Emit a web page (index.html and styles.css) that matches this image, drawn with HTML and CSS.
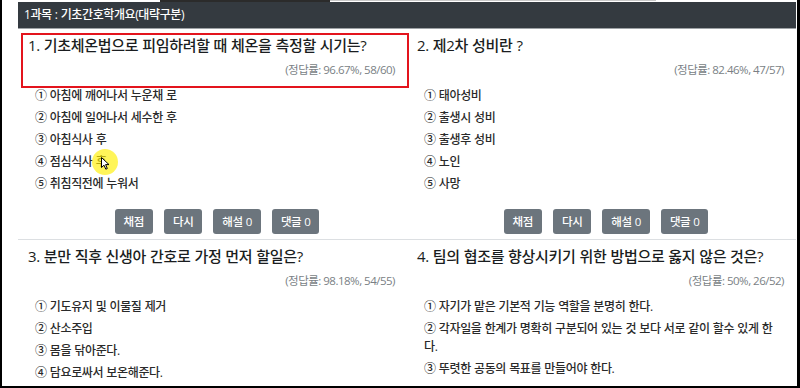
FILE: index.html
```html
<!DOCTYPE html>
<html lang="ko">
<head>
<meta charset="utf-8">
<title>1과목 : 기초간호학개요</title>
<link rel="stylesheet" href="styles.css">
</head>
<body>
<div class="frame">
  <div class="topstrip"><span class="ts-dark"></span><span class="ts-light"></span></div>
  <div class="sheet">
    <div class="subject">1과목 : 기초간호학개요(대략구분)</div>
    <div class="grid">
      <section class="q q-top">
        <h2 class="q-title">1. 기초체온법으로 피임하려할 때 체온을 측정할 시기는?</h2>
        <p class="q-stat">(정답률: 96.67%, 58/60)</p>
        <ul class="opts">
          <li>① 아침에 깨어나서 누운채 로</li>
          <li>② 아침에 일어나서 세수한 후</li>
          <li>③ 아침식사 후</li>
          <li>④ 점심식사 후</li>
          <li>⑤ 취침직전에 누워서</li>
        </ul>
        <div class="actions">
          <button class="btn">채점</button>
          <button class="btn">다시</button>
          <button class="btn">해설 0</button>
          <button class="btn">댓글 0</button>
        </div>
      </section>
      <section class="q q-top">
        <h2 class="q-title">2. 제2차 성비란 ?</h2>
        <p class="q-stat">(정답률: 82.46%, 47/57)</p>
        <ul class="opts">
          <li>① 태아성비</li>
          <li>② 출생시 성비</li>
          <li>③ 출생후 성비</li>
          <li>④ 노인</li>
          <li>⑤ 사망</li>
        </ul>
        <div class="actions">
          <button class="btn">채점</button>
          <button class="btn">다시</button>
          <button class="btn">해설 0</button>
          <button class="btn">댓글 0</button>
        </div>
      </section>
      <section class="q">
        <h2 class="q-title">3. 분만 직후 신생아 간호로 가정 먼저 할일은?</h2>
        <p class="q-stat">(정답률: 98.18%, 54/55)</p>
        <ul class="opts">
          <li>① 기도유지 및 이물질 제거</li>
          <li>② 산소주입</li>
          <li>③ 몸을 닦아준다.</li>
          <li>④ 담요로싸서 보온해준다.</li>
        </ul>
      </section>
      <section class="q">
        <h2 class="q-title">4. 팀의 협조를 향상시키기 위한 방법으로 옳지 않은 것은?</h2>
        <p class="q-stat">(정답률: 50%, 26/52)</p>
        <ul class="opts">
          <li>① 자기가 맡은 기본적 기능 역할을 분명히 한다.</li>
          <li>② 각자일을 한계가 명확히 구분되어 있는 것 보다 서로 같이 할수 있게 한다.</li>
          <li>③ 뚜렷한 공동의 목표를 만들어야 한다.</li>
        </ul>
      </section>
    </div>
    <div class="annot"></div>
    <div class="pointer">
      <svg class="arrow" width="9" height="13" viewBox="0 0 9 13"><path d="M0.5 0.5 L0.5 10.5 L3 8.2 L4.8 12.2 L6.3 11.5 L4.6 7.6 L8 7.6 Z" fill="#fff" stroke="#000" stroke-width="1" stroke-linejoin="round"/></svg>
    </div>
  </div>
</div>
</body>
</html>
```
FILE: styles.css
```css
* { box-sizing: border-box; }
html, body { margin: 0; padding: 0; background: #fff; }
body {
  font-family: "Open Sans", "Noto Sans CJK KR", sans-serif;
  color: #212529;
}
.frame {
  width: 800px;
  height: 388px;
  border-left: 2px solid #000;
  border-right: 3px solid #000;
  border-bottom: 2px solid #000;
  overflow: hidden;
  display: flex;
  flex-direction: column;
}
.topstrip {
  height: 3px;
  display: flex;
  align-items: flex-start;
  padding-left: 158px;
}
.ts-dark { width: 170px; height: 2px; background: #2b2b2b; }
.ts-light { width: 326px; height: 1px; background: #c8c8c8; }
.sheet {
  position: relative;
  margin-left: 16px;
  margin-right: 1px;
}
.subject {
  height: 27px;
  background: #343a40;
  border-bottom: 1px solid #9ea2a6;
  color: #fff;
  font-size: 12px;
  font-weight: 500;
  letter-spacing: -0.4px;
  word-spacing: 0.4px;
  line-height: 26px;
  padding-left: 6px;
}
.grid {
  display: grid;
  grid-template-columns: 1fr 1fr;
}
.q {
  padding: 5px 12px 5px 10px;
  min-width: 0;
}
.q-top { border-bottom: 1px solid #dcdfe2; }
.q-title {
  margin: 0;
  font-size: 15px;
  font-weight: 500;
  line-height: 22px;
  letter-spacing: -0.3px;
  word-spacing: 0.3px;
  color: #1a1d20;
}
.q-stat {
  margin: 5px 0 0;
  text-align: right;
  font-size: 11.5px;
  line-height: 18px;
  letter-spacing: -0.5px;
  color: #7a7f85;
}
.opts {
  list-style: none;
  margin: 8px 0 0;
  padding: 0 0 0 7px;
  display: flex;
  flex-direction: column;
  gap: 4px;
}
.opts li {
  font-size: 12px;
  font-weight: 500;
  line-height: 18px;
  letter-spacing: -0.35px;
  word-spacing: 0.35px;
  color: #2a2a2a;
}
.actions {
  margin-top: 16px;
  display: flex;
  justify-content: center;
  gap: 11px;
  padding-left: 11px;
}
.btn {
  height: 25px;
  padding: 0 9px;
  border: 0;
  border-radius: 3px;
  background: #6c757d;
  color: #fff;
  font-family: inherit;
  font-size: 11.5px;
  font-weight: 500;
  letter-spacing: -0.4px;
  word-spacing: 0.4px;
  line-height: 25px;
}
.annot {
  position: absolute;
  left: 3px;
  top: 31px;
  width: 388px;
  height: 55px;
  border: 2px solid #e3141d;
}
.pointer {
  position: absolute;
  left: 74px;
  top: 147px;
  width: 26px;
  height: 26px;
  border-radius: 50%;
  background: rgba(255, 240, 0, 0.65);
}
.arrow {
  position: absolute;
  left: 9px;
  top: 8px;
}
```
